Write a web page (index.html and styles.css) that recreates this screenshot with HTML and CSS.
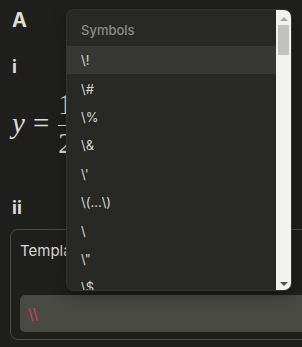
FILE: index.html
```html
<!DOCTYPE html>
<html lang="en">
<head>
    <meta charset="UTF-8">
    <meta name="viewport" content="width=device-width, initial-scale=1.0">
    <title>Template editor</title>
    <link rel="stylesheet" href="styles.css">
</head>
<body>

    <div class="page">
        <h1 class="title">A</h1>

        <h3 class="section">i</h3>

        <!-- Rendered formula -->
        <div class="math">
            <span class="mi">y</span>
            <span class="mo">=</span>
            <span class="frac">
                <span class="num">1</span>
                <span class="den">2</span>
            </span>
        </div>

        <h3 class="section second">ii</h3>

        <div class="card">
            <div class="card-label">Template</div>
            <div class="editor"><span class="cmd">\\</span></div>
        </div>
    </div>

    <!-- Autocomplete popup -->
    <div class="suggest">
        <div class="suggest-list">
            <div class="suggest-head">Symbols</div>
            <div class="item active">\!</div>
            <div class="item">\#</div>
            <div class="item">\%</div>
            <div class="item">\&amp;</div>
            <div class="item">\'</div>
            <div class="item">\(...\)</div>
            <div class="item">\&nbsp;</div>
            <div class="item">\"</div>
            <div class="item">\$</div>
            <div class="item">\*</div>
            <div class="item">\,</div>
            <div class="item">\-</div>
        </div>
        <div class="scrollbar">
            <div class="sb-btn up"></div>
            <div class="sb-track"><div class="sb-thumb"></div></div>
            <div class="sb-btn down"></div>
        </div>
    </div>

</body>
</html>
```

FILE: styles.css
```css
html, body {
    overflow: hidden;
}

body {
    font-family: 'Inter', 'Noto Sans', sans-serif;
    margin: 0;
    padding: 0;
    background-color: #1f201d;
    color: #dedcd3;
    position: relative;
    height: 347px;
}

.page {
    padding: 8px 12px 0 12px;
    width: 420px;
}

.title {
    margin: 0;
    font-size: 20px;
    line-height: 24px;
    font-weight: 700;
}

.section {
    margin: 24px 0 0 0;
    font-size: 18px;
    line-height: 22px;
    font-weight: 700;
}

.section.second {
    margin-top: 41px;
}

/* Formula */
.math {
    display: flex;
    align-items: center;
    height: 65px;
    margin-top: 13px;
    font-family: 'Liberation Serif', 'DejaVu Serif', serif;
    font-size: 29px;
    color: #dedcd3;
}

.mi {
    font-style: italic;
}

.mo {
    margin: 0 9px 0 8px;
}

.frac {
    display: inline-flex;
    flex-direction: column;
    align-items: flex-start;
}

.num {
    line-height: 26px;
    border-bottom: 1px solid #dedcd3;
    padding: 0 4px 8px 0;
}

.den {
    line-height: 26px;
    padding: 4px 0 0;
}

/* Template card */
.card {
    margin: 10px 0 0 -2px;
    border: 1px solid #4c4c47;
    border-radius: 8px;
    padding: 10px 8px 7px 9px;
    width: 400px;
}

.card-label {
    font-size: 15px;
    line-height: 22px;
    color: #dad8cf;
}

.editor {
    margin-top: 33px;
    background: #4a4a45;
    border-radius: 5px;
    height: 37px;
    padding: 0 8px;
    display: flex;
    align-items: center;
    font-size: 15px;
}

.cmd {
    color: #d13f63;
}

/* Suggestion popup */
.suggest {
    position: absolute;
    left: 67px;
    top: 10px;
    width: 224px;
    height: 280px;
    display: flex;
    overflow: hidden;
    background: #282825;
    border-radius: 7px;
    box-shadow: 0 0 0 1px #33332f, 0 6px 16px rgba(0, 0, 0, 0.35);
}

.suggest-list {
    flex: 1;
    overflow: hidden;
}

.suggest-head {
    height: 36px;
    display: flex;
    align-items: center;
    padding: 3px 0 0 14px;
    box-sizing: border-box;
    font-size: 13px;
    font-weight: 500;
    color: #8d8c85;
}

.item {
    height: 28.4px;
    display: flex;
    align-items: center;
    padding-left: 14px;
    font-size: 13px;
    color: #d8d7cf;
    white-space: pre;
}

.item.active {
    background: #373733;
}

/* Classic scrollbar */
.scrollbar {
    width: 15px;
    background: #f1f1f1;
    display: flex;
    flex-direction: column;
}

.sb-btn {
    height: 15px;
    flex: none;
    display: flex;
    justify-content: center;
    align-items: center;
}

.sb-btn::before {
    content: "";
    width: 0;
    height: 0;
    border-left: 4px solid transparent;
    border-right: 4px solid transparent;
}

.sb-btn.up::before {
    border-bottom: 4px solid #a3a3a3;
    margin-top: 2px;
}

.sb-btn.down::before {
    border-top: 4px solid #505050;
    margin-top: 2px;
}

.sb-track {
    flex: 1;
    padding: 0 2px;
}

.sb-thumb {
    height: 30px;
    background: #c1c1c1;
}
```
